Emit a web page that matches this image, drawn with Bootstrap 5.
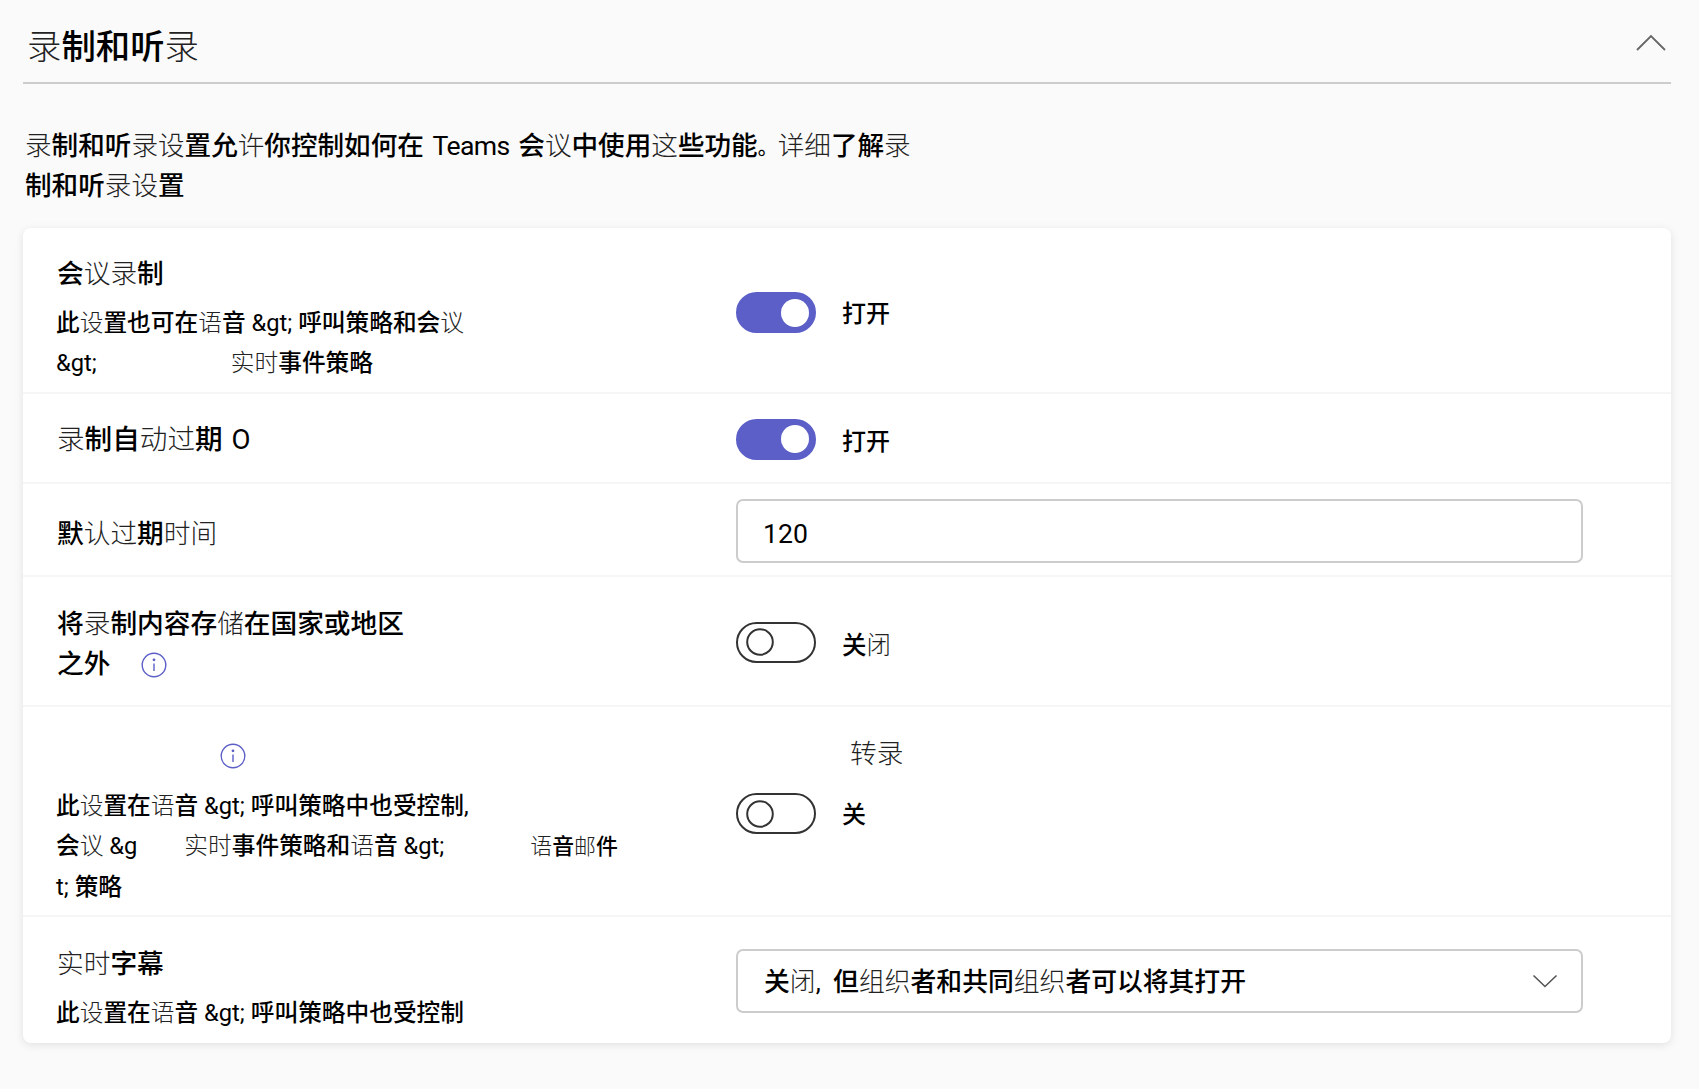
<!DOCTYPE html>
<html lang="zh-CN">
<head>
    <meta charset="UTF-8">
    <title>录制和听录</title>
    <link href="https://cdn.jsdelivr.net/npm/bootstrap@5.3.3/dist/css/bootstrap.min.css" rel="stylesheet">
    <style>
        body { background: #fafafa; color: #000; font-family: Roboto, "Noto Sans CJK SC", sans-serif; font-size: 26.7px; font-weight: 500; }
        .thin-ch { font-weight: 300; color: #222; }
        .lat-ch { font-weight: 400; }
        .page-wrap { padding: 0 28px 46px 23px; }
        .sec-head { height: 84px; border-bottom: 2px solid #ccc; padding: 13px 5px 0 4px; }
        .sec-title { font-size: 34.4px; font-weight: 500; line-height: 68px; margin: 0; }
        .sec-icon { margin-top: 21px; }
        .sec-intro { width: 900px; margin: 42px 0 22px 2px; font-size: 26.6px; line-height: 40px; word-spacing: 2px; }
        .sec-intro .lat-ch { letter-spacing: -.6px; }
        .stop { font-size: 20px; line-height: 1; }
        .set-card { background: #fff; border-radius: 8px; box-shadow: 0 2px 8px rgba(0,0,0,.1); }
        .set-row { border-bottom: 2px solid #f6f6f6; padding-left: 34px; }
        .set-row:last-child { border-bottom: 0; }
        .set-left { width: 679px; flex: none; }
        .set-right { width: 847px; flex: none; }
        .set-sub { font-size: 23.7px; line-height: 40px; margin-left: -1px; }
        .row-rec { height: 166px; padding-top: 26px; }
        .row-exp { height: 90px; padding-top: 2px; }
        .row-days { height: 93px; padding-top: 2px; }
        .row-store { height: 130px; padding-top: 2px; }
        .row-trans { height: 210px; padding-top: 27px; }
        .row-caps { height: 126px; padding-top: 27px; }
        .row-exp .tgl-txt { padding-top: 5px; }
        .row-store .tgl-txt { padding-top: 8px; font-size: 24.5px; }
        .lab { line-height: 40px; }
        .lab-big { font-size: 27.6px; padding-top: 2px; word-spacing: 2px; }
        .lab-low { padding-top: 6px; }
        .lab-mid { padding-top: 4px; }
        .sub-gap { margin-top: 9px; }
        .sub-gap2 { margin-top: 12px; }
        .tgl-gap { margin-top: 38px; }
        .tgl-gap2 { margin-top: 19px; }
        .caps-right { margin-top: 5px; }
        .trans-lab { margin-left: 114px; }
        .form-switch { padding: 0; margin: 0; min-height: 0; }
        .form-switch .form-check-input.tgl { width: 80px; height: 41px; margin: 0; float: none; display: block; border: 2px solid #333; border-radius: 21px; background-color: #fff; background-repeat: no-repeat; background-position: 8px center; background-size: 28px 28px; background-image: url("data:image/svg+xml,%3csvg xmlns='http://www.w3.org/2000/svg' viewBox='0 0 28 28'%3e%3ccircle cx='14' cy='14' r='12.8' fill='none' stroke='%23333' stroke-width='2'/%3e%3c/svg%3e"); }
        .form-switch .form-check-input.tgl:checked { border-color: #5b5fc7; background-color: #5b5fc7; background-position: 43px center; background-image: url("data:image/svg+xml,%3csvg xmlns='http://www.w3.org/2000/svg' viewBox='0 0 28 28'%3e%3ccircle cx='14' cy='14' r='14' fill='%23fff'/%3e%3c/svg%3e"); }
        .tgl-txt { font-size: 24px; margin-left: 26px; padding-top: 2px; }
        .fld { height: 64px; width: 847px; border: 2px solid #ccc; border-radius: 7px; font-size: 25.8px; font-weight: 500; color: #000; padding: 2px 26px 0; box-shadow: none; word-spacing: 6px; }
        .fld.num { font-size: 26.6px; font-weight: 400; padding-top: 6px; padding-left: 25px; }
        .form-select.fld { background-position: right 23px center; background-size: 26px 14px; background-image: url("data:image/svg+xml,%3csvg xmlns='http://www.w3.org/2000/svg' viewBox='0 0 26 14'%3e%3cpath d='M1.5 1.5 13 12.5 24.5 1.5' fill='none' stroke='%23555' stroke-width='1.6'/%3e%3c/svg%3e"); }
        .info-a { margin-left: 24px; margin-top: -2px; }
        .info-b { margin-left: 163px; }
        .gap-a { display: inline-block; width: 134px; }
        .gap-b { display: inline-block; width: 47px; }
        .gap-c { display: inline-block; width: 86px; }
        .small-run { font-size: 21.9px; }
    </style>
</head>
<body>
<div class="page-wrap">
    <div class="sec-head d-flex justify-content-between">
        <h2 class="sec-title">录制和听录</h2>
        <svg class="sec-icon" width="30" height="17" viewBox="0 0 30 17" fill="none" stroke="#666" stroke-width="1.8"><path d="M1 16 15 2 29 16"/></svg>
    </div>
    <p class="sec-intro">录制和听录设置允许你控制如何在 Teams 会议中使用这些功能<span class="stop">。</span>详细了解录制和听录设置</p>

    <div class="set-card">
        <div class="set-row row-rec d-flex">
            <div class="set-left">
                <div class="lab">会议录制</div>
                <div class="set-sub sub-gap">此设置也可在语音 &amp;gt; 呼叫策略和会议<br>&amp;gt;<span class="gap-a"></span>实时事件策略</div>
            </div>
            <div class="set-right d-flex align-items-center align-self-start tgl-gap">
                <div class="form-check form-switch"><input class="form-check-input tgl" type="checkbox" checked></div>
                <span class="tgl-txt">打开</span>
            </div>
        </div>
        <div class="set-row row-exp d-flex align-items-center">
            <div class="set-left lab lab-big">录制自动过期 O</div>
            <div class="set-right d-flex align-items-center">
                <div class="form-check form-switch"><input class="form-check-input tgl" type="checkbox" checked></div>
                <span class="tgl-txt">打开</span>
            </div>
        </div>
        <div class="set-row row-days d-flex align-items-center">
            <div class="set-left lab lab-low">默认过期时间</div>
            <div class="set-right"><input class="form-control fld num" type="text" value="120"></div>
        </div>
        <div class="set-row row-store d-flex align-items-center">
            <div class="set-left lab lab-mid">将录制内容存储在国家或地区<br>之外
                <svg class="info-a" width="26" height="26" viewBox="0 0 26 26" fill="none" stroke="#5b5fc7" stroke-width="1.4"><circle cx="13" cy="13" r="11.8"/><path d="M13 11.5V19"/><circle cx="13" cy="7.8" r=".7" fill="#5b5fc7"/></svg>
            </div>
            <div class="set-right d-flex align-items-center">
                <div class="form-check form-switch"><input class="form-check-input tgl" type="checkbox"></div>
                <span class="tgl-txt">关闭</span>
            </div>
        </div>
        <div class="set-row row-trans d-flex">
            <div class="set-left">
                <div class="lab">
                    <svg class="info-b" width="26" height="26" viewBox="0 0 26 26" fill="none" stroke="#5b5fc7" stroke-width="1.4"><circle cx="13" cy="13" r="11.8"/><path d="M13 11.5V19"/><circle cx="13" cy="7.8" r=".7" fill="#5b5fc7"/></svg>
                </div>
                <div class="set-sub sub-gap2">此设置在语音 &amp;gt; 呼叫策略中也受控制,<br>会议 &amp;g<span class="gap-b"></span>实时事件策略和语音 &amp;gt;<span class="gap-c"></span><span class="small-run">语音邮件</span><br>t; 策略</div>
            </div>
            <div class="set-right">
                <div class="lab trans-lab">转录</div>
                <div class="d-flex align-items-center tgl-gap2">
                    <div class="form-check form-switch"><input class="form-check-input tgl" type="checkbox"></div>
                    <span class="tgl-txt">关</span>
                </div>
            </div>
        </div>
        <div class="set-row row-caps d-flex">
            <div class="set-left">
                <div class="lab">实时字幕</div>
                <div class="set-sub sub-gap">此设置在语音 &amp;gt; 呼叫策略中也受控制</div>
            </div>
            <div class="set-right caps-right">
                <div class="form-select fld d-flex align-items-center"><span>关闭, 但组织者和共同组织者可以将其打开</span></div>
            </div>
        </div>
    </div>
</div>
<script>
// the reference draws these glyphs noticeably lighter than the rest, and its latin text is regular
const thinChars = /[录设议语时实认过间组织闭转储动邮许这详细]/;
const splitter = /([录设议语时实认过间组织闭转储动邮许这详细]|[A-Za-z0-9&;,]+)/;
const walker = document.createTreeWalker(document.body, NodeFilter.SHOW_TEXT);
const nodes = [];
while (walker.nextNode()) {
    if (walker.currentNode.parentNode.tagName !== 'SCRIPT' && splitter.test(walker.currentNode.nodeValue)) nodes.push(walker.currentNode);
}
nodes.forEach(n => {
    const frag = document.createDocumentFragment();
    n.nodeValue.split(splitter).forEach((part, i) => {
        if (!part) return;
        if (i % 2) {
            const s = document.createElement('span');
            s.className = thinChars.test(part) ? 'thin-ch' : 'lat-ch';
            s.textContent = part;
            frag.appendChild(s);
        } else {
            frag.appendChild(document.createTextNode(part));
        }
    });
    n.parentNode.replaceChild(frag, n);
});
</script>
</body>
</html>
